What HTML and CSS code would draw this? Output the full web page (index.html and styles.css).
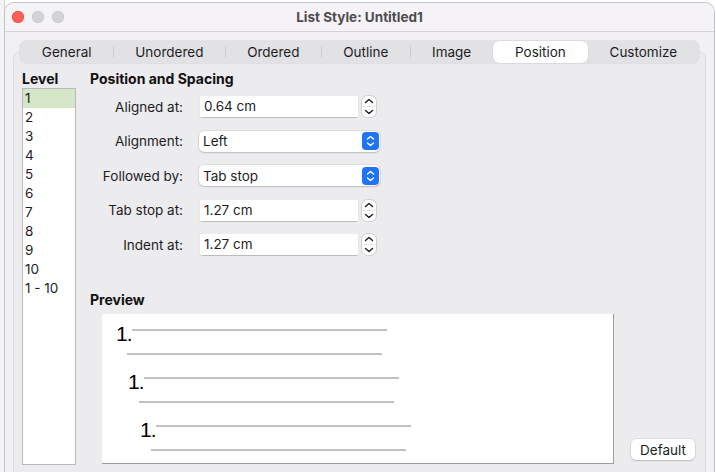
FILE: index.html
```html
<!DOCTYPE html>
<html>
<head>
  <title>List Style: Untitled1</title>
  <link rel="stylesheet" href="styles.css">
</head>
<body>
  <div class="behind"></div>
  <div class="window">
    <div class="titlebar">
      <div class="lights">
        <span class="light red"></span>
        <span class="light"></span>
        <span class="light"></span>
      </div>
      <div class="title">List Style: Untitled1</div>
      <div></div>
    </div>

    <div class="panel">
      <div class="tabs">
        <div class="tab">General</div>
        <div class="tab sep">Unordered</div>
        <div class="tab sep">Ordered</div>
        <div class="tab sep">Outline</div>
        <div class="tab sep">Image</div>
        <div class="tab active">Position</div>
        <div class="tab">Customize</div>
      </div>

      <div class="page">
        <div class="levels">
          <div class="heading">Level</div>
          <div class="level-list">
            <div class="level selected">1</div>
            <div class="level">2</div>
            <div class="level">3</div>
            <div class="level">4</div>
            <div class="level">5</div>
            <div class="level">6</div>
            <div class="level">7</div>
            <div class="level">8</div>
            <div class="level">9</div>
            <div class="level">10</div>
            <div class="level">1 - 10</div>
          </div>
        </div>

        <div class="main">
          <div class="heading">Position and Spacing</div>
          <div class="form">
            <div class="row">
              <label class="label">Aligned at:</label>
              <div class="field">0.64 cm</div>
              <svg class="spin" width="16" height="23" viewBox="0 0 16 23">
                <rect x="0.5" y="0.5" width="15" height="22" rx="6" fill="#fff" stroke="#cfcdd1"/>
                <line x1="2" y1="11.5" x2="14" y2="11.5" stroke="#e4e2e6"/>
                <path d="M4.5 7.5 L8 4.5 L11.5 7.5" fill="none" stroke="#222" stroke-width="1.5" stroke-linecap="round" stroke-linejoin="round"/>
                <path d="M4.5 15.5 L8 18.5 L11.5 15.5" fill="none" stroke="#222" stroke-width="1.5" stroke-linecap="round" stroke-linejoin="round"/>
              </svg>
            </div>
            <div class="row">
              <label class="label">Alignment:</label>
              <div class="select">
                <span>Left</span>
                <svg class="pop" width="17" height="18" viewBox="0 0 17 18">
                  <rect width="17" height="18" rx="4" fill="#1e74f5"/>
                  <path d="M5.5 7 L8.5 4.5 L11.5 7" fill="none" stroke="#fff" stroke-width="1.4" stroke-linecap="round" stroke-linejoin="round"/>
                  <path d="M5.5 11 L8.5 13.5 L11.5 11" fill="none" stroke="#fff" stroke-width="1.4" stroke-linecap="round" stroke-linejoin="round"/>
                </svg>
              </div>
            </div>
            <div class="row">
              <label class="label">Followed by:</label>
              <div class="select">
                <span>Tab stop</span>
                <svg class="pop" width="17" height="18" viewBox="0 0 17 18">
                  <rect width="17" height="18" rx="4" fill="#1e74f5"/>
                  <path d="M5.5 7 L8.5 4.5 L11.5 7" fill="none" stroke="#fff" stroke-width="1.4" stroke-linecap="round" stroke-linejoin="round"/>
                  <path d="M5.5 11 L8.5 13.5 L11.5 11" fill="none" stroke="#fff" stroke-width="1.4" stroke-linecap="round" stroke-linejoin="round"/>
                </svg>
              </div>
            </div>
            <div class="row">
              <label class="label">Tab stop at:</label>
              <div class="field">1.27 cm</div>
              <svg class="spin" width="16" height="23" viewBox="0 0 16 23">
                <rect x="0.5" y="0.5" width="15" height="22" rx="6" fill="#fff" stroke="#cfcdd1"/>
                <line x1="2" y1="11.5" x2="14" y2="11.5" stroke="#e4e2e6"/>
                <path d="M4.5 7.5 L8 4.5 L11.5 7.5" fill="none" stroke="#222" stroke-width="1.5" stroke-linecap="round" stroke-linejoin="round"/>
                <path d="M4.5 15.5 L8 18.5 L11.5 15.5" fill="none" stroke="#222" stroke-width="1.5" stroke-linecap="round" stroke-linejoin="round"/>
              </svg>
            </div>
            <div class="row">
              <label class="label">Indent at:</label>
              <div class="field">1.27 cm</div>
              <svg class="spin" width="16" height="23" viewBox="0 0 16 23">
                <rect x="0.5" y="0.5" width="15" height="22" rx="6" fill="#fff" stroke="#cfcdd1"/>
                <line x1="2" y1="11.5" x2="14" y2="11.5" stroke="#e4e2e6"/>
                <path d="M4.5 7.5 L8 4.5 L11.5 7.5" fill="none" stroke="#222" stroke-width="1.5" stroke-linecap="round" stroke-linejoin="round"/>
                <path d="M4.5 15.5 L8 18.5 L11.5 15.5" fill="none" stroke="#222" stroke-width="1.5" stroke-linecap="round" stroke-linejoin="round"/>
              </svg>
            </div>
          </div>

          <div class="heading preview-heading">Preview</div>
          <div class="preview-row">
            <div class="preview">
              <div class="pv-item lvl1">
                <div class="pv-first"><span class="pv-num">1.</span><span class="pv-line"></span></div>
                <span class="pv-line pv-cont"></span>
              </div>
              <div class="pv-item lvl2">
                <div class="pv-first"><span class="pv-num">1.</span><span class="pv-line"></span></div>
                <span class="pv-line pv-cont"></span>
              </div>
              <div class="pv-item lvl3">
                <div class="pv-first"><span class="pv-num">1.</span><span class="pv-line"></span></div>
                <span class="pv-line pv-cont"></span>
              </div>
            </div>
            <button class="button">Default</button>
          </div>
        </div>
      </div>
    </div>
  </div>
</body>
</html>
```

FILE: styles.css
```css
body {
  margin: 0;
  width: 716px;
  height: 472px;
  overflow: hidden;
  background: #ffffff;
  font-family: Inter, "Liberation Sans", sans-serif;
  font-size: 13.5px;
  color: #1d1d1f;
  display: flex;
}

.behind {
  width: 4px;
  background: #f4f4f4;
  border-right: 1px solid #d0d0d0;
}

.window {
  flex: 1;
  margin: 2px 1px 0 -1px;
  height: 470px;
  box-sizing: border-box;
  border: 1px solid #c4c3c6;
  border-bottom: none;
  border-radius: 10px 10px 0 0;
  background: #f2f0f3;
  overflow: hidden;
}

.titlebar {
  height: 28px;
  border-bottom: 1px solid #d5d3d7;
  background: #f5f3f6;
  display: grid;
  grid-template-columns: 1fr auto 1fr;
  align-items: center;
}

.lights {
  display: flex;
  gap: 8px;
  padding-left: 7px;
}

.light {
  width: 12px;
  height: 12px;
  border-radius: 50%;
  background: #d4d3d5;
  box-shadow: inset 0 0 0 0.5px #c2c1c3;
}

.light.red {
  background: #fe5f57;
  box-shadow: inset 0 0 0 0.5px #e0443e;
}

.title {
  font-weight: 700;
  color: #4d4c4e;
}

.panel {
  margin: 20px 8px 0 8px;
  height: 460px;
  border: 1px solid #dddbdf;
  border-radius: 6px;
  background: #ecebee;
}

.tabs {
  margin: -12px 6px 0 6px;
  height: 22px;
  display: flex;
  background: #e2e1e4;
  border-radius: 6px;
  box-shadow: 0 0 0 0.5px #d6d4d8;
}

.tab {
  flex: auto;
  display: flex;
  align-items: center;
  justify-content: center;
  position: relative;
  color: #1d1d1f;
}

.tab.sep::before {
  content: "";
  position: absolute;
  left: 0;
  top: 5px;
  bottom: 5px;
  border-left: 1px solid #cfcdd1;
}

.tab.active {
  background: #ffffff;
  border-radius: 6px;
  box-shadow: 0 0 1px rgba(0, 0, 0, 0.25);
}

.page {
  display: flex;
  padding: 8px 0 0 8px;
}

.heading {
  font-weight: 700;
  font-size: 14px;
  line-height: 16px;
  height: 16px;
  color: #111111;
}

.levels {
  width: 54px;
}

.level-list {
  margin-top: 1px;
  height: 377px;
  box-sizing: border-box;
  border: 1px solid #b9b8bb;
  background: #ffffff;
}

.level {
  height: 19px;
  line-height: 19px;
  padding-left: 2px;
}

.level.selected {
  background: #d4e5c8;
}

.main {
  flex: 1;
  margin-left: 14px;
}

.form {
  margin-top: 9px;
  display: flex;
  flex-direction: column;
  gap: 13.5px;
}

.row {
  display: flex;
  align-items: center;
  height: 21px;
}

.label {
  width: 93px;
  text-align: right;
  margin-right: 17px;
  white-space: nowrap;
}

.field {
  width: 158px;
  height: 21px;
  box-sizing: border-box;
  padding-left: 4px;
  line-height: 21px;
  background: #ffffff;
  box-shadow: 0 0.5px 1px rgba(0, 0, 0, 0.2);
}

.spin {
  margin-left: 3px;
}

.select {
  width: 181px;
  height: 21px;
  margin-left: -1px;
  box-sizing: border-box;
  padding: 0 1px 0 4px;
  display: flex;
  align-items: center;
  justify-content: space-between;
  background: #ffffff;
  border-radius: 5px;
  box-shadow: 0 0 0 0.5px rgba(0, 0, 0, 0.12), 0 1px 1.5px rgba(0, 0, 0, 0.15);
}

.preview-heading {
  margin-top: 37px;
}

.preview-row {
  margin-top: 6px;
  display: flex;
}

.preview {
  margin-left: 12px;
  width: 512px;
  height: 150px;
  box-sizing: border-box;
  padding-top: 9px;
  background: #ffffff;
  border-right: 1px solid #9c9b9e;
  border-bottom: 1px solid #9c9b9e;
  overflow: hidden;
}

.pv-item {
  height: 48px;
}

.lvl1 { margin-left: 14px; }
.lvl2 { margin-left: 26px; }
.lvl3 { margin-left: 38px; }

.pv-first {
  display: flex;
  align-items: flex-start;
  height: 30px;
}

.pv-num {
  font-family: "Liberation Sans", sans-serif;
  font-size: 21px;
  line-height: 21px;
  letter-spacing: -1px;
  color: #000000;
}

.pv-line {
  display: block;
  width: 255px;
  height: 2px;
  margin-top: 6px;
  background: #c0c0c0;
}

.pv-cont {
  margin: 0 0 0 11px;
}

.button {
  align-self: flex-end;
  margin: 0 10px 4px auto;
  width: 64px;
  height: 21px;
  padding: 0;
  font-family: inherit;
  font-size: 13.5px;
  color: #1d1d1f;
  background: #ffffff;
  border: none;
  border-radius: 5px;
  box-shadow: 0 0 0 0.5px rgba(0, 0, 0, 0.12), 0 1px 1.5px rgba(0, 0, 0, 0.15);
}
```
